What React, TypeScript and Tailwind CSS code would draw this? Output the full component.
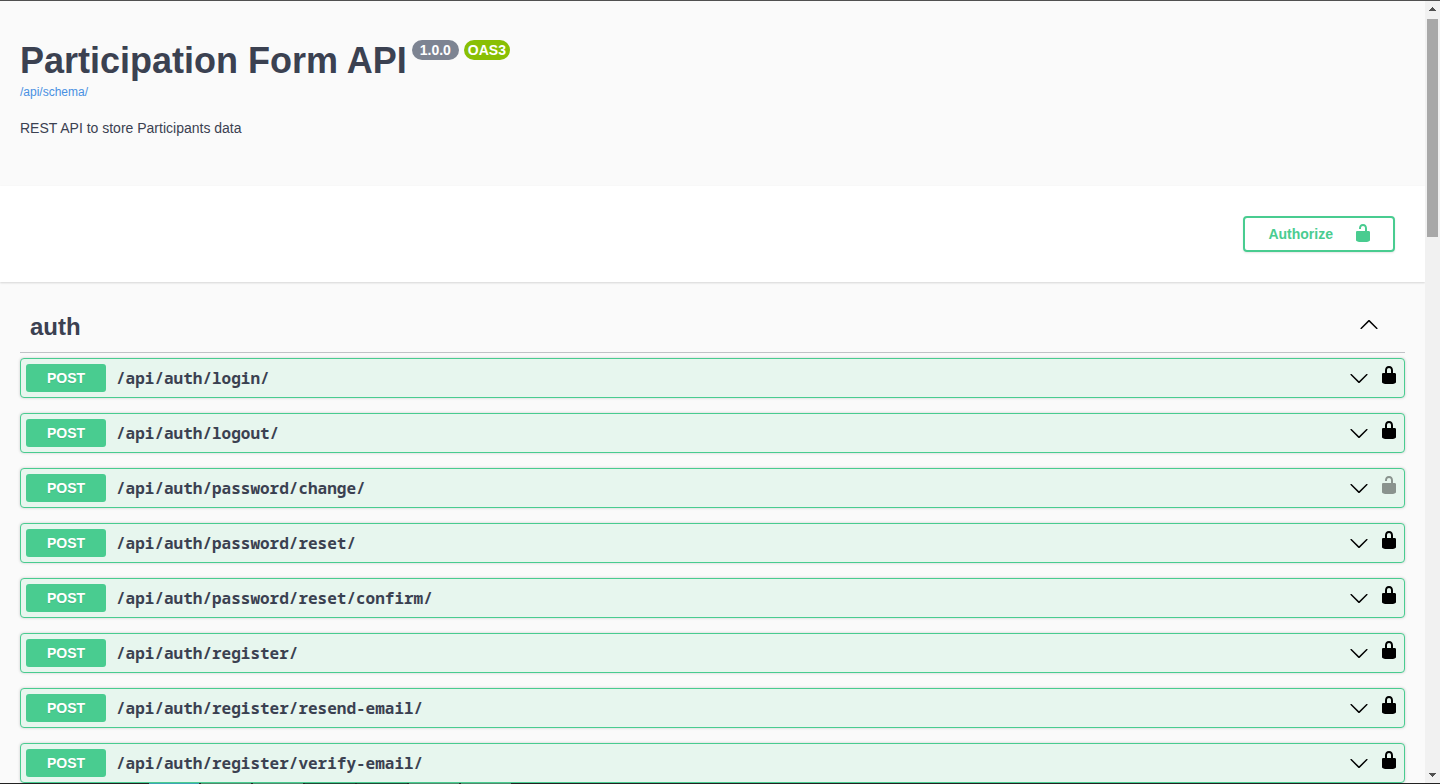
type IconProps = { className?: string };

function LockIcon({ className = "" }: IconProps) {
  return (
    <svg viewBox="0 0 20 20" className={`size-5 shrink-0 fill-current ${className}`} aria-hidden="true">
      <path d="M15.8 8H14V5.6C14 2.703 12.665 1 10 1 7.334 1 6 2.703 6 5.6V8H4c-.553 0-1 .646-1 1.199V17c0 .549.428 1.139.951 1.307l1.197.387C5.672 18.861 6.55 19 7.1 19h5.8c.549 0 1.428-.139 1.951-.307l1.196-.387c.524-.167.953-.757.953-1.306V9.199C17 8.646 16.352 8 15.8 8zM12 8H8V5.199C8 3.754 8.797 3 10 3c1.203 0 2 .754 2 2.199V8z" />
    </svg>
  );
}

function UnlockIcon({ className = "" }: IconProps) {
  return (
    <svg viewBox="0 0 20 20" className={`size-5 shrink-0 fill-current ${className}`} aria-hidden="true">
      <path d="M15.8 8H14V5.6C14 2.703 12.665 1 10 1 7.334 1 6 2.703 6 5.6V6h2v-.801C8 3.754 8.797 3 10 3c1.203 0 2 .754 2 2.199V8H4c-.553 0-1 .646-1 1.199V17c0 .549.428 1.139.951 1.307l1.197.387C5.672 18.861 6.55 19 7.1 19h5.8c.549 0 1.428-.139 1.951-.307l1.196-.387c.524-.167.953-.757.953-1.306V9.199C17 8.646 16.352 8 15.8 8z" />
    </svg>
  );
}

function ArrowDown() {
  return (
    <svg viewBox="0 0 20 20" className="size-5 shrink-0 fill-black" aria-hidden="true">
      <path d="M17.418 6.109c.272-.268.709-.268.979 0s.271.701 0 .969l-7.908 7.83c-.27.268-.707.268-.979 0l-7.908-7.83c-.27-.268-.27-.701 0-.969.271-.268.709-.268.979 0L10 13.25z" />
    </svg>
  );
}

function ArrowUp() {
  return (
    <svg viewBox="0 0 20 20" className="size-5 shrink-0 fill-black" aria-hidden="true">
      <path d="M17.418 14.908c.272.268.709.268.979 0s.271-.701 0-.969l-7.908-7.83c-.27-.268-.707-.268-.979 0l-7.908 7.83c-.27.268-.27.701 0 .969.271.268.709.268.979 0L10 7.767z" />
    </svg>
  );
}

const operations = [
  { path: "/api/auth/login/", locked: true },
  { path: "/api/auth/logout/", locked: true },
  { path: "/api/auth/password/change/", locked: false },
  { path: "/api/auth/password/reset/", locked: true },
  { path: "/api/auth/password/reset/confirm/", locked: true },
  { path: "/api/auth/register/", locked: true },
  { path: "/api/auth/register/resend-email/", locked: true },
  { path: "/api/auth/register/verify-email/", locked: true },
];

function Operation({ path, locked }: { path: string; locked: boolean }) {
  return (
    <li className="flex h-10 items-center rounded-sm border border-[#49cc90] bg-[#e7f6ee] pr-[5px] shadow-[0_0_3px_rgba(0,0,0,0.19)]">
      <button type="button" aria-label={`Expand ${path}`} className="flex h-full min-w-0 flex-1 items-center pl-[5px] text-left">
        <span className="w-20 rounded-[3px] bg-[#49cc90] text-center text-sm leading-7 font-bold text-white [text-shadow:0_1px_0_rgba(0,0,0,0.1)]">
          POST
        </span>
        <span className="flex-1 truncate px-2.5 font-['Noto_Sans_Mono','DejaVu_Sans_Mono',monospace] text-base leading-7 font-bold text-[#3b4151]">
          {path}
        </span>
        <ArrowDown />
      </button>
      <button type="button" aria-label={locked ? "Authorization set" : "Authorization not set"} className="ml-2.5 h-[26px] self-start pt-1.5">
        {locked ? <LockIcon className="text-black" /> : <UnlockIcon className="text-black opacity-40" />}
      </button>
    </li>
  );
}

function Scrollbar() {
  return (
    <div className="flex w-[15px] shrink-0 flex-col items-center bg-[#f1f1f1]" aria-hidden="true">
      <svg viewBox="0 0 15 18" className="h-[18px] w-[15px] fill-[#505050]">
        <path d="M7 6h1v1h1v1h1v1h1v1H4V9h1V8h1V7h1z" />
      </svg>
      <div className="h-[218px] w-[11px] bg-[#a8a8a8]" />
      <svg viewBox="0 0 15 18" className="mt-auto h-[18px] w-[15px] fill-[#505050]">
        <path d="M4 8h7v1h-1v1H9v1H8v1H7v-1H6v-1H5V9H4z" />
      </svg>
    </div>
  );
}

function BottomEdge() {
  return (
    <div className="flex h-px gap-0.5 bg-[#222222]" aria-hidden="true">
      <span className="w-[147px]" />
      <span className="w-[50px] bg-[#3fa3b5]" />
      <span className="w-[50px] bg-[#4f8a6c]" />
      <span className="w-[50px] bg-[#4f8a6c]" />
      <span className="w-[50px] bg-[#1f4a36]" />
      <span className="w-[50px] bg-[#1f4a36]" />
      <span className="w-[50px] bg-[#4f8a6c]" />
      <span className="w-[50px] bg-[#4f8a6c]" />
    </div>
  );
}

export default function App() {
  return (
    <div className="flex min-h-screen flex-col border-t border-[#505050] bg-[#fafafa] font-['Liberation_Sans',Arial,sans-serif] text-[#3b4151]">
      <div className="flex flex-1">
        <main className="min-w-0 flex-1">
          <header className="px-5 pt-[39px] pb-12">
            <div className="flex items-start gap-[5px]">
              <h1 className="text-4xl leading-[42px] font-bold">Participation Form API</h1>
              <span className="rounded-full bg-[#7d8492] px-2 text-sm leading-5 font-bold text-white">1.0.0</span>
              <span className="rounded-full bg-[#89bf04] px-1 text-sm leading-5 font-bold text-white">OAS3</span>
            </div>
            <a href="/api/schema/" className="block w-fit text-xs leading-5 text-[#4990e2]">
              /api/schema/
            </a>
            <p className="mt-4 text-sm leading-5">REST API to store Participants data</p>
          </header>

          <section className="flex justify-end bg-white px-[30px] py-[30px] shadow-[0_1px_2px_rgba(0,0,0,0.15)]">
            <button
              type="button"
              className="flex h-9 items-start gap-5 rounded-sm border-2 border-[#49cc90] pt-[5px] pr-5 pl-[23px] text-sm font-bold text-[#49cc90] shadow-[0_1px_2px_rgba(0,0,0,0.1)]"
            >
              <span className="leading-[22px]">Authorize</span>
              <UnlockIcon />
            </button>
          </section>

          <section className="px-5 pt-5">
            <h2 className="border-b border-[#3b4151]/30">
              <button type="button" className="flex h-[50px] w-full items-start justify-between pt-3 pr-[26px] pl-2.5 text-2xl font-bold">
                <span className="leading-[26px]">auth</span>
                <ArrowUp />
              </button>
            </h2>
            <ul className="mt-[5px] flex flex-col gap-[15px]">
              {operations.map((op) => (
                <Operation key={op.path} {...op} />
              ))}
            </ul>
          </section>
        </main>
        <Scrollbar />
      </div>
      <BottomEdge />
    </div>
  );
}
